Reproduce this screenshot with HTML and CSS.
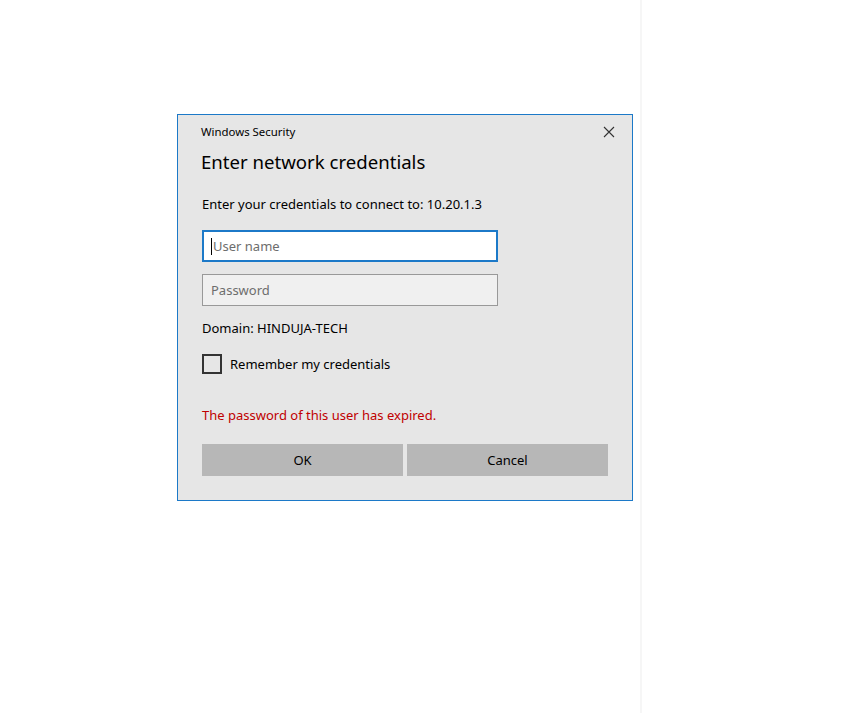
FILE: index.html
```html
<!DOCTYPE html>
<html>
<head>
<meta charset="utf-8">
<link rel="stylesheet" href="styles.css">
</head>
<body>
<div class="desktop">
  <div class="pane">
    <div class="dialog">
      <div class="titlebar">
        <span class="app">Windows Security</span>
        <span class="close">
          <svg width="12" height="12" viewBox="0 0 12 12"><path d="M1 1 L11 11 M11 1 L1 11" stroke="#333" stroke-width="1.1" fill="none"/></svg>
        </span>
      </div>
      <h1 class="heading">Enter network credentials</h1>
      <p class="info">Enter your credentials to connect to: 10.20.1.3</p>
      <div class="field focused"><span class="caret"></span><span class="ph">User name</span></div>
      <div class="field pw"><span class="ph">Password</span></div>
      <p class="domain">Domain: HINDUJA-TECH</p>
      <label class="remember"><span class="box"></span><span>Remember my credentials</span></label>
      <p class="error">The password of this user has expired.</p>
      <div class="buttons">
        <button class="btn">OK</button>
        <button class="btn">Cancel</button>
      </div>
    </div>
  </div>
  <div class="side"></div>
</div>
</body>
</html>
```
FILE: styles.css
```css
html, body {
  margin: 0;
  padding: 0;
  background: #ffffff;
  font-family: "Noto Sans", "Open Sans", sans-serif;
  color: #000;
}
.desktop {
  display: flex;
  height: 713px;
}
.pane {
  width: 642px;
  box-sizing: border-box;
  padding: 114px 0 0 177px;
  border-right: 2px solid #f6f6f6;
}
.dialog {
  width: 456px;
  height: 387px;
  box-sizing: border-box;
  border: 1px solid #1c79c8;
  background: #e6e6e6;
  padding: 0 24px 0 24px;
}
.titlebar {
  display: flex;
  justify-content: space-between;
  align-items: center;
  height: 32px;
}
.app {
  font-size: 11.4px;
  color: #000;
  margin-left: -1px;
}
.close {
  display: flex;
  width: 12px;
  height: 12px;
  margin-right: -7px;
  margin-top: 1px;
}
.heading {
  margin: 2px 0 0 -1px;
  font-weight: 400;
  font-size: 18.6px;
  line-height: 26px;
  color: #000;
}
.info {
  margin: 20px 0 0 0;
  font-size: 13px;
  line-height: 18px;
}
.field {
  width: 296px;
  height: 32px;
  box-sizing: border-box;
  margin: 17px 0 0 0;
  border: 1px solid #999;
  background: #f0f0f0;
  display: flex;
  align-items: center;
  padding-left: 8px;
  font-size: 13px;
  color: #6d6d6d;
}
.field.focused {
  border: 2px solid #1c79c8;
  background: #ffffff;
  padding-left: 7px;
}
.field.pw {
  margin-top: 12px;
}
.caret {
  width: 1px;
  height: 17px;
  background: #000;
  margin-right: 1px;
}
.domain {
  margin: 13px 0 0 0;
  font-size: 13px;
  line-height: 18px;
}
.remember {
  display: flex;
  align-items: center;
  margin: 17px 0 0 0;
  font-size: 13px;
  line-height: 20px;
}
.box {
  width: 20px;
  height: 20px;
  box-sizing: border-box;
  border: 2px solid #333;
  margin-right: 8px;
}
.error {
  margin: 32px 0 0 0;
  font-size: 13px;
  line-height: 18px;
  color: #c00000;
}
.buttons {
  display: flex;
  gap: 4px;
  margin: 20px 0 0 0;
}
.btn {
  width: 201px;
  height: 32px;
  border: none;
  background: #b7b7b7;
  font-family: inherit;
  font-size: 13px;
  color: #000;
  padding: 0;
}
.side {
  flex: 1;
}
```
